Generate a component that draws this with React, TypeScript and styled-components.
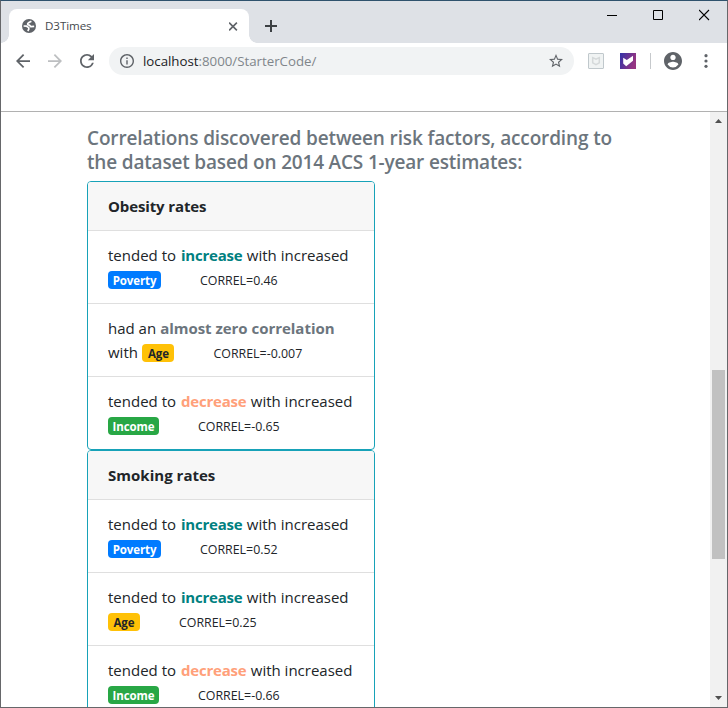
import React from 'react';
import styled, { createGlobalStyle } from 'styled-components';

const GlobalStyle = createGlobalStyle`
  *, *::before, *::after { box-sizing: border-box; }
  html, body { margin: 0; padding: 0; overflow: hidden; }
  body { font-family: 'Open Sans', 'Noto Sans', sans-serif; color: #212529; }
  svg { display: block; flex: none; }
`;

const Window = styled.div`
  width: 728px;
  height: 708px;
  display: flex;
  flex-direction: column;
  background: #fff;
  border: 1px solid #66676a;
  border-top-color: #2f526d;
  overflow: hidden;
`;

const TabStrip = styled.header`
  height: 42px;
  flex: none;
  display: flex;
  align-items: flex-end;
  background: #dee1e6;
`;

const Tab = styled.div`
  position: relative;
  width: 240px;
  height: 34px;
  margin-left: 8px;
  padding: 0 11px 0 13px;
  display: flex;
  align-items: center;
  background: #fff;
  border-radius: 8px 8px 0 0;
  &::before, &::after {
    content: '';
    position: absolute;
    bottom: 0;
    width: 8px;
    height: 8px;
  }
  &::before { left: -8px; background: radial-gradient(circle at 0 0, transparent 7.5px, #fff 8px); }
  &::after { right: -8px; background: radial-gradient(circle at 100% 0, transparent 7.5px, #fff 8px); }
`;

const TabTitle = styled.span`
  flex: 1;
  margin-left: 9px;
  font-size: 11.6px;
  line-height: 16px;
  letter-spacing: -0.08px;
  color: #45494d;
`;

const NewTab = styled.div`
  margin: 0 0 11px 16px;
`;

const WindowControls = styled.div`
  align-self: flex-start;
  display: flex;
  gap: 35px;
  margin: 8px 17px 0 auto;
`;

const Toolbar = styled.nav`
  height: 69px;
  flex: none;
  display: flex;
  align-items: flex-start;
  border-bottom: 1px solid #b1b1b1;
`;

const NavButtons = styled.div`
  width: 108px;
  height: 36px;
  padding-left: 15px;
  display: flex;
  align-items: center;
  gap: 18px;
`;

const AddressBar = styled.div`
  width: 465px;
  height: 28px;
  margin-top: 4px;
  padding: 0 11px;
  display: flex;
  align-items: center;
  border-radius: 14px;
  background: #f1f3f4;
`;

const Url = styled.span`
  flex: 1;
  margin-left: 9px;
  font-size: 13.3px;
  line-height: 20px;
  letter-spacing: -0.02px;
  color: #80868b;
`;

const Host = styled.span`
  color: #202124;
`;

const Extensions = styled.div`
  height: 36px;
  margin-left: 14px;
  display: flex;
  align-items: center;
`;

const ExtensionIcon = styled.div`
  margin-right: 16px;
`;

const Divider = styled.div`
  width: 1px;
  height: 16px;
  margin: 0 13px 0 -2px;
  background: #c6c9cc;
`;

const MenuIcon = styled.div`
  margin-left: 21.5px;
`;

const Viewport = styled.div`
  flex: 1;
  min-height: 0;
  display: flex;
  overflow: hidden;
`;

const Page = styled.main`
  flex: 1;
  padding: 14px 0 0 86px;
`;

const Heading = styled.h5`
  margin: 0 0 7px;
  font-size: 19px;
  font-weight: 600;
  line-height: 24px;
  color: #6c757d;
`;

const HeadingLine = styled.span<{ $spacing: number }>`
  display: block;
  white-space: nowrap;
  letter-spacing: ${(p) => p.$spacing}px;
`;

const Card = styled.section`
  width: 288px;
  border: 1px solid #17a2b8;
  border-radius: 4px;
  overflow: hidden;
`;

const CardHeader = styled.div<{ $spacing: number }>`
  height: 49px;
  padding: 12px 20px;
  font-size: 15px;
  font-weight: 700;
  line-height: 24px;
  letter-spacing: ${(p) => p.$spacing}px;
  background: #f7f7f7;
  border-bottom: 1px solid #dfdfdf;
`;

const List = styled.ul`
  margin: 0;
  padding: 0;
  list-style: none;
`;

const Item = styled.li`
  padding: 12px 0 12px 20px;
  font-size: 15px;
  line-height: 24px;
  & + & { border-top: 1px solid #dfdfdf; }
`;

const Line = styled.div`
  height: 24px;
  display: flex;
  align-items: center;
  white-space: nowrap;
`;

const tones = {
  increase: { color: '#008080', spacing: -0.22, before: 5 },
  decrease: { color: '#ffa07a', spacing: -0.22, before: 5 },
  none: { color: '#6c757d', spacing: -0.03, before: 4 },
};

const Trend = styled.b<{ $tone: keyof typeof tones }>`
  margin: 0 4.4px 0 ${(p) => tones[p.$tone].before}px;
  font-weight: 700;
  letter-spacing: ${(p) => tones[p.$tone].spacing}px;
  color: ${(p) => tones[p.$tone].color};
`;

const badges = {
  Poverty: { bg: '#007bff', fg: '#fff', width: 53 },
  Age: { bg: '#ffc107', fg: '#212529', width: 32 },
  Income: { bg: '#28a745', fg: '#fff', width: 51 },
};

const Badge = styled.span<{ $kind: keyof typeof badges }>`
  width: ${(p) => badges[p.$kind].width}px;
  height: 18px;
  margin-top: 2px;
  display: flex;
  justify-content: center;
  border-radius: 4px;
  font-size: 11.5px;
  font-weight: 700;
  line-height: 19px;
  letter-spacing: -0.1px;
  color: ${(p) => badges[p.$kind].fg};
  background: ${(p) => badges[p.$kind].bg};
`;

const Lead = styled.span`
  margin-right: 4.5px;
`;

const Correl = styled.span`
  margin-left: 39px;
  padding-top: 3px;
  font-size: 12.4px;
`;

const Scrollbar = styled.aside`
  width: 17px;
  padding: 7px 2px 7px;
  display: flex;
  flex-direction: column;
  align-items: center;
  background: #f1f1f1;
`;

const Thumb = styled.div`
  width: 13px;
  height: 189px;
  margin: 247px 0 auto;
  background: #c1c1c1;
`;

type RowData = { tone: keyof typeof tones; kind: keyof typeof badges; value: string };

const cards: { title: string; spacing: number; rows: RowData[] }[] = [
  {
    title: 'Obesity rates',
    spacing: -0.12,
    rows: [
      { tone: 'increase', kind: 'Poverty', value: '0.46' },
      { tone: 'none', kind: 'Age', value: '-0.007' },
      { tone: 'decrease', kind: 'Income', value: '-0.65' },
    ],
  },
  {
    title: 'Smoking rates',
    spacing: 0.02,
    rows: [
      { tone: 'increase', kind: 'Poverty', value: '0.52' },
      { tone: 'increase', kind: 'Age', value: '0.25' },
      { tone: 'decrease', kind: 'Income', value: '-0.66' },
    ],
  },
];

const Row = ({ tone, kind, value }: RowData) => (
  <Item>
    <Line>
      {tone === 'none' ? 'had an' : 'tended to'}
      <Trend $tone={tone}>{tone === 'none' ? 'almost zero correlation' : tone}</Trend>
      {tone !== 'none' && 'with increased'}
    </Line>
    <Line>
      {tone === 'none' && <Lead>with</Lead>}
      <Badge $kind={kind}>{kind}</Badge>
      <Correl>CORREL={value}</Correl>
    </Line>
  </Item>
);

type GlyphProps = { d: string; box: string; size: number; color?: string };
const Glyph = ({ d, box, size, color = '#5f6368' }: GlyphProps) => (
  <svg width={size} height={size} viewBox={box} fill={color}>
    <path d={d} />
  </svg>
);

export default function App() {
  return (
    <Window>
      <GlobalStyle />
      <TabStrip>
        <Tab>
          <svg width="14" height="14" viewBox="0 0 14 14">
            <circle cx="7" cy="7" r="7" fill="#5f6368" />
            <path
              d="M9.4 2.2 7.4 3.2 5.8 4.4Q5.2 6 7.4 6.2L8.8 7.7 12.2 7.4M1.6 7 4.6 7.2 6.7 8.6 6.8 10.2 5.8 12"
              fill="none"
              stroke="#fff"
              strokeWidth="1.7"
              strokeLinejoin="round"
            />
          </svg>
          <TabTitle>D3Times</TabTitle>
          <svg width="9" height="9" viewBox="0 0 9 9" stroke="#5f6368" strokeWidth="1.6">
            <path d="M.1.6 7.9 8.4M7.9.6.1 8.4" />
          </svg>
        </Tab>
        <NewTab>
          <svg width="12" height="12" viewBox="0 0 12 12" fill="#3c4043">
            <path d="M5 0h2v5h5v2H7v5H5V7H0V5h5z" />
          </svg>
        </NewTab>
        <WindowControls>
          <svg width="11" height="12" viewBox="0 0 11 12">
            <path d="M0 6.5h10" stroke="#000" />
          </svg>
          <svg width="11" height="12" viewBox="0 0 11 12">
            <path d="M.5 1.5h9v9h-9z" stroke="#000" fill="none" />
          </svg>
          <svg width="11" height="12" viewBox="0 0 11 12">
            <path d="m0 1 10 10M10 1 0 11" stroke="#000" strokeWidth="1.1" />
          </svg>
        </WindowControls>
      </TabStrip>
      <Toolbar>
        <NavButtons>
          <Glyph size={14} box="4 4 16 16" d="M20 11H7.83l5.59-5.59L12 4l-8 8 8 8 1.41-1.41L7.83 13H20v-2z" />
          <Glyph
            size={14}
            box="4 4 16 16"
            color="#bdbfc1"
            d="m12 4-1.41 1.41L16.17 11H4v2h12.17l-5.58 5.59L12 20l8-8z"
          />
          <Glyph
            size={14}
            box="4 4 16 16"
            d="M17.65 6.35A7.958 7.958 0 0 0 12 4c-4.42 0-7.99 3.58-7.99 8s3.57 8 7.99 8c3.73 0 6.84-2.55 7.73-6h-2.08A5.99 5.99 0 0 1 12 18c-3.31 0-6-2.69-6-6s2.69-6 6-6c1.66 0 3.14.69 4.22 1.78L13 11h7V4l-2.35 2.35z"
          />
        </NavButtons>
        <AddressBar>
          <Glyph
            size={14}
            box="2 2 20 20"
            d="M11 7h2v2h-2zm0 4h2v6h-2zm1-9C6.48 2 2 6.48 2 12s4.48 10 10 10 10-4.48 10-10S17.52 2 12 2zm0 18c-4.41 0-8-3.59-8-8s3.59-8 8-8 8 3.59 8 8-3.59 8-8 8z"
          />
          <Url>
            <Host>localhost</Host>:8000/StarterCode/
          </Url>
          <Glyph
            size={14}
            box="2 2 20 20"
            d="m22 9.24-7.19-.62L12 2 9.19 8.63 2 9.24l5.46 4.73L5.82 21 12 17.27 18.18 21l-1.63-7.03L22 9.24zM12 15.4l-3.76 2.27 1-4.28-3.32-2.88 4.38-.38L12 6.1l1.71 4.04 4.38.38-3.32 2.88 1 4.28L12 15.4z"
          />
        </AddressBar>
        <Extensions>
          <ExtensionIcon>
            <svg width="16" height="16" viewBox="0 0 16 16">
              <rect x=".5" y=".5" width="15" height="15" rx=".5" fill="#f0f3f3" stroke="#c0c8cc" />
              <path d="M4.7 4.6 8 6.1l3.3-1.5v5.2L8 11.6 4.7 9.8z" fill="none" stroke="#d5d9da" strokeWidth="1.5" />
            </svg>
          </ExtensionIcon>
          <ExtensionIcon>
            <svg width="16" height="16" viewBox="0 0 16 16">
              <defs>
                <linearGradient id="shield" x1="0" y1="0" x2="1" y2=".35">
                  <stop offset="0" stopColor="#3332a8" />
                  <stop offset="1" stopColor="#963582" />
                </linearGradient>
              </defs>
              <rect width="16" height="16" fill="url(#shield)" />
              <path d="M3.2 4.8 6.8 7l6.2-4.2v5L6.2 13.2 3.2 10.5z" fill="#fff" />
            </svg>
          </ExtensionIcon>
          <Divider />
          <Glyph
            size={18}
            box="2 2 20 20"
            d="M12 2C6.48 2 2 6.48 2 12s4.48 10 10 10 10-4.48 10-10S17.52 2 12 2zm0 3c1.66 0 3 1.34 3 3s-1.34 3-3 3-3-1.34-3-3 1.34-3 3-3zm0 14.2a7.2 7.2 0 0 1-6-3.22c.03-1.99 4-3.08 6-3.08 1.99 0 5.97 1.09 6 3.08a7.2 7.2 0 0 1-6 3.22z"
          />
          <MenuIcon>
            <svg width="4" height="14" viewBox="0 0 4 14" fill="#5f6368">
              <circle cx="2" cy="1.7" r="1.6" />
              <circle cx="2" cy="7" r="1.6" />
              <circle cx="2" cy="12.3" r="1.6" />
            </svg>
          </MenuIcon>
        </Extensions>
      </Toolbar>
      <Viewport>
        <Page>
          <Heading>
            <HeadingLine $spacing={-0.14}>Correlations discovered between risk factors, according to</HeadingLine>
            <HeadingLine $spacing={-0.18}>the dataset based on 2014 ACS 1-year estimates:</HeadingLine>
          </Heading>
          {cards.map((card) => (
            <Card key={card.title}>
              <CardHeader $spacing={card.spacing}>{card.title}</CardHeader>
              <List>
                {card.rows.map((row) => (
                  <Row key={row.kind} {...row} />
                ))}
              </List>
            </Card>
          ))}
        </Page>
        <Scrollbar>
          <svg width="7" height="4" viewBox="0 0 7 4" fill="#505050">
            <path d="M3.5 0 7 4H0z" />
          </svg>
          <Thumb />
          <svg width="7" height="4" viewBox="0 0 7 4" fill="#505050">
            <path d="M0 0h7L3.5 4z" />
          </svg>
        </Scrollbar>
      </Viewport>
    </Window>
  );
}
